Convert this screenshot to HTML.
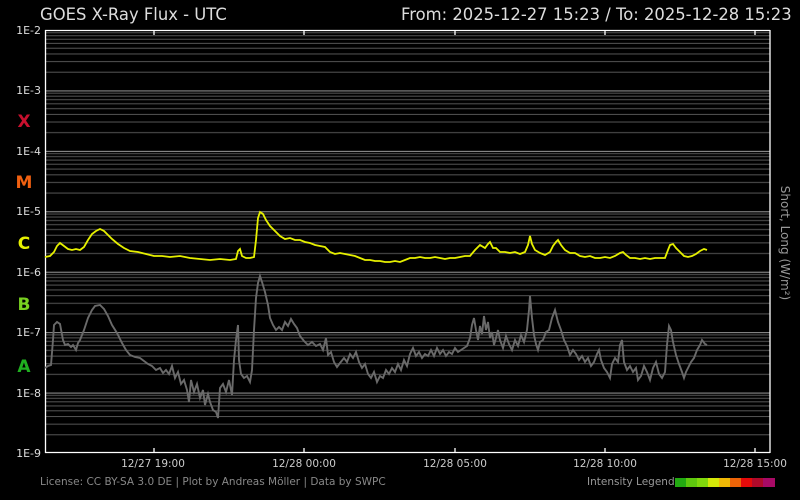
<!DOCTYPE html>
<html><head><meta charset="utf-8"><style>
html,body{margin:0;padding:0;background:#000;width:800px;height:500px;overflow:hidden}
svg{display:block}
text{font-family:"DejaVu Sans","Liberation Sans",sans-serif}
</style></head><body>
<svg width="800" height="500" viewBox="0 0 800 500">
<defs>
<pattern id="g" patternUnits="userSpaceOnUse" x="0" y="30" width="800" height="60.43">
<g stroke="#555" stroke-width="1">
<line x1="0" x2="800" y1="2.7" y2="2.7"/><line x1="0" x2="800" y1="5.8" y2="5.8"/>
<line x1="0" x2="800" y1="9.3" y2="9.3"/><line x1="0" x2="800" y1="13.4" y2="13.4"/>
<line x1="0" x2="800" y1="18.2" y2="18.2"/><line x1="0" x2="800" y1="24" y2="24"/>
<line x1="0" x2="800" y1="31.6" y2="31.6"/><line x1="0" x2="800" y1="42.2" y2="42.2"/>
</g>
<line x1="0" x2="800" y1="0.5" y2="0.5" stroke="#999" stroke-width="1"/>
</pattern>
</defs>
<rect x="45" y="30" width="725" height="423" fill="url(#g)"/>
<g stroke="#fff" stroke-width="1.3" fill="none">
<line x1="45" y1="30.5" x2="770" y2="30.5"/>
<line x1="45.5" y1="30" x2="45.5" y2="453"/>
<line x1="770" y1="30" x2="770" y2="453"/>
<line x1="45" y1="452.5" x2="770" y2="452.5"/>
<path d="M154 30v5M304 30v5M455 30v5M605 30v5M755 30v5M154 453v-5M304 453v-5M455 453v-5M605 453v-5M755 453v-5"/>
</g>
<polyline fill="none" stroke="#6a6a6a" stroke-width="1.9" points="45,368 48,366 51,365 53,340 54,325 57,322 60,324 63,340 65,345 68,344 71,347 73,345 76,350 78,343 80,340 84,330 88,318 92,310 95,306 100,305 104,309 108,316 112,325 117,333 122,343 126,350 130,355 135,357 140,358 144,361 148,364 152,366 156,370 160,368 163,373 166,370 169,374 172,366 175,378 178,372 181,384 184,380 187,390 189,402 191,380 194,392 197,384 200,398 203,390 205,405 208,394 210,402 213,410 216,412 218,418 220,388 223,384 226,392 229,380 232,395 234,360 236,340 238,325 239,360 241,374 244,378 247,376 250,382 252,370 254,330 256,298 258,283 260,276 262,282 265,292 268,305 270,318 273,325 276,330 279,327 282,330 285,322 288,326 291,319 294,324 297,328 300,336 304,341 308,345 312,342 316,346 320,344 323,350 326,338 328,355 331,352 334,362 337,367 340,363 344,358 347,362 350,354 353,358 356,352 359,362 362,368 365,364 368,374 371,378 374,372 377,382 380,376 383,378 386,370 389,374 392,368 395,372 398,364 401,370 404,360 407,366 410,354 413,348 416,356 419,352 422,358 425,354 428,356 431,350 434,356 437,348 440,354 443,350 446,356 449,352 452,354 455,348 458,352 461,350 464,348 467,346 470,338 472,325 474,318 476,330 478,340 480,326 482,334 484,316 486,330 488,322 490,338 492,332 494,345 496,338 498,330 500,340 503,348 506,336 509,344 512,350 515,340 518,346 521,335 524,342 527,330 529,310 530,296 532,318 534,335 536,344 538,350 540,342 543,340 546,332 549,330 552,318 555,310 558,322 561,330 564,340 567,346 570,355 573,350 576,354 579,360 582,356 585,362 588,358 591,366 594,362 597,354 599,350 601,360 604,368 607,372 610,378 612,364 615,358 618,362 620,345 622,340 624,362 627,370 630,366 633,372 636,368 638,380 641,376 644,366 647,372 650,380 653,368 656,362 659,374 662,378 665,372 667,345 669,326 671,330 673,342 676,355 679,364 682,372 684,378 686,372 688,368 691,362 694,358 697,350 700,345 702,340 705,344 707,345"/>
<polyline fill="none" stroke="#e6f000" stroke-width="1.8" points="45,257 50,256 54,252 57,246 60,243 64,246 68,249 72,250 76,249 80,250 84,247 88,240 92,234 96,231 100,229 104,231 108,235 112,239 118,244 124,248 130,251 138,252 146,254 154,256 162,256 170,257 180,256 190,258 200,259 210,260 220,259 230,260 236,259 238,251 240,249 242,256 246,258 250,258 254,257 256,240 258,218 260,212 263,214 266,220 270,226 275,231 280,236 285,239 290,238 295,240 300,240 305,242 310,243 315,245 320,246 325,247 330,252 335,254 340,253 345,254 350,255 355,256 360,258 365,260 370,260 375,261 380,261 385,262 390,262 395,261 400,262 405,260 410,258 415,258 420,257 425,258 430,258 435,257 440,258 445,259 450,258 455,258 460,257 465,256 470,256 475,250 480,245 485,248 488,244 490,242 493,248 496,248 500,252 505,252 510,253 515,252 520,254 525,252 528,245 530,236 532,244 535,250 540,253 545,255 550,252 553,246 556,242 558,240 561,245 565,250 570,253 575,253 580,256 585,257 590,256 595,258 600,258 605,257 610,258 615,256 620,253 623,252 626,255 630,258 635,258 640,259 645,258 650,259 655,258 660,258 665,258 668,250 670,245 673,244 676,248 680,252 684,256 688,257 692,256 696,254 700,251 704,249 707,250"/>
<g fill="#ddd" font-size="11" text-anchor="end">
<text x="41" y="34">1E-2</text><text x="41" y="94">1E-3</text><text x="41" y="155">1E-4</text><text x="41" y="215">1E-5</text><text x="41" y="276">1E-6</text><text x="41" y="336">1E-7</text><text x="41" y="397">1E-8</text><text x="41" y="457">1E-9</text>
</g>
<g font-size="17" font-weight="bold" text-anchor="middle">
<text x="24" y="127" fill="#c8102e">X</text>
<text x="24" y="188" fill="#f06010">M</text>
<text x="24" y="249" fill="#e6f000">C</text>
<text x="24" y="310" fill="#78d020">B</text>
<text x="24" y="372" fill="#20b020">A</text>
</g>
<text x="40" y="20" fill="#ddd" font-size="16.4">GOES X-Ray Flux - UTC</text>
<text x="401" y="20" fill="#ddd" font-size="16.4">From: 2025-12-27 15:23  /  To: 2025-12-28 15:23</text>
<g fill="#ccc" font-size="10.5" text-anchor="middle">
<text x="153" y="467">12/27 19:00</text><text x="304" y="467">12/28 00:00</text><text x="455" y="467">12/28 05:00</text><text x="605" y="467">12/28 10:00</text><text x="755" y="467">12/28 15:00</text>
</g>
<text x="40" y="485" fill="#888" font-size="10.5">License: CC BY-SA 3.0 DE | Plot by Andreas Möller | Data by SWPC</text>
<text x="587" y="485" fill="#999" font-size="10.5">Intensity Legend</text>
<g>
<rect x="675" y="478" width="12" height="9" fill="#22aa11"/><rect x="686" y="478" width="12" height="9" fill="#5ec80e"/><rect x="697" y="478" width="12" height="9" fill="#80d80c"/><rect x="708" y="478" width="12" height="9" fill="#d4e808"/><rect x="719" y="478" width="12" height="9" fill="#f0b806"/><rect x="730" y="478" width="12" height="9" fill="#ec6408"/><rect x="741" y="478" width="12" height="9" fill="#e40a0a"/><rect x="752" y="478" width="12" height="9" fill="#b00a2a"/><rect x="763" y="478" width="12" height="9" fill="#a80a66"/>
</g>
<text transform="translate(781,243) rotate(90)" fill="#999" font-size="12" text-anchor="middle">Short, Long (W/m²)</text>
</svg>
</body></html>
